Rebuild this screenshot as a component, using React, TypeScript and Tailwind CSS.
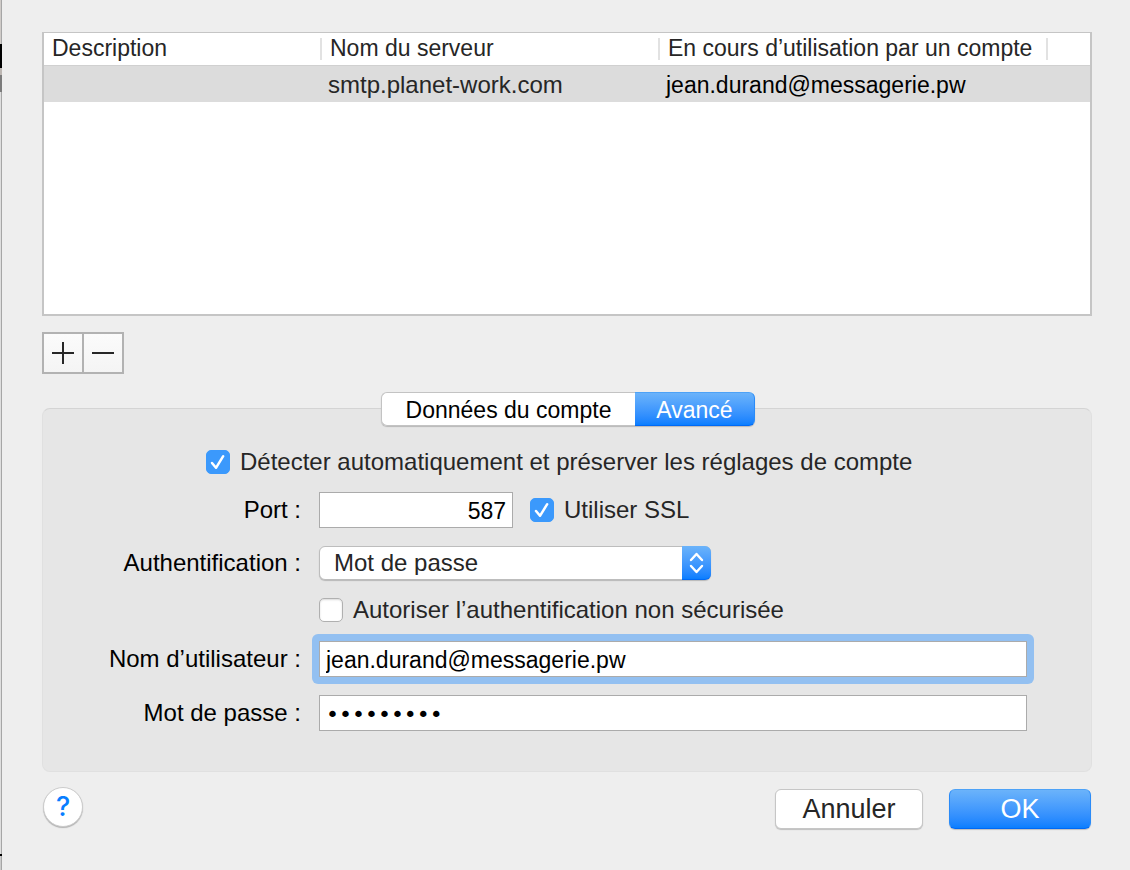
import { useState, type InputHTMLAttributes, type ReactNode } from 'react';

interface SmtpServer {
  description: string;
  host: string;
  usedBy: string;
}

const servers: SmtpServer[] = [
  { description: '', host: 'smtp.planet-work.com', usedBy: 'jean.durand@messagerie.pw' },
];

const columns = ['Description', 'Nom du serveur', 'En cours d’utilisation par un compte'];

const tabs = [
  { id: 'account', label: 'Données du compte', width: 'w-[254px]' },
  { id: 'advanced', label: 'Avancé', width: 'w-[120px]' },
];

function Checkbox({ id, label, defaultChecked }: { id: string; label: string; defaultChecked?: boolean }) {
  return (
    <div className="flex items-center gap-[10px]">
      <span className="relative w-6 h-6 shrink-0">
        <input
          id={id}
          type="checkbox"
          defaultChecked={defaultChecked}
          className="peer block appearance-none w-6 h-6 rounded-[5px] bg-white border border-[#b0b0b0] shadow-[inset_0_1px_2px_rgba(0,0,0,0.15)] checked:bg-[#3b99fc] checked:border-[#3b99fc] checked:shadow-none"
        />
        <svg className="absolute inset-0 w-6 h-6 pointer-events-none hidden peer-checked:block" viewBox="0 0 24 24" fill="none">
          <path d="M6 13l4 4.8 7.2-11.6" stroke="white" strokeWidth="2.5" strokeLinecap="round" strokeLinejoin="round" />
        </svg>
      </span>
      <label htmlFor={id} className="text-2xl leading-6 text-[#262626] whitespace-nowrap">{label}</label>
    </div>
  );
}

function Field({ id, label, children }: { id?: string; label?: string; children: ReactNode }) {
  return (
    <div className="flex items-center gap-[18px]">
      {label ? (
        <label htmlFor={id} className="w-[258px] shrink-0 text-right text-2xl leading-6 text-black whitespace-nowrap">{label} :</label>
      ) : (
        <span className="w-[258px] shrink-0" />
      )}
      {children}
    </div>
  );
}

function TextInput({ className, ...props }: InputHTMLAttributes<HTMLInputElement>) {
  return (
    <input
      {...props}
      className={`h-9 min-w-0 bg-white border border-[#ababab] text-black outline-none pt-[2px] px-[6px] ${className ?? ''}`}
    />
  );
}

export default function App() {
  const [activeTab, setActiveTab] = useState('advanced');

  return (
    <div className="min-h-screen flex bg-[#eeeeee] text-[23px] leading-6 font-['Liberation_Sans',Arial,sans-serif]">
      {/* Sliver of the window behind the sheet */}
      <div className="w-[2px] shrink-0 flex flex-col">
        <div className="h-11 bg-[#cfcbc8] border-r border-[#a6a6a6]" />
        <div className="h-6 bg-black" />
        <div className="h-[7px] bg-[#bdb7b3]" />
        <div className="h-[17px] bg-[#7c7c7c]" />
        <div className="flex-1 bg-[#dedede] border-r border-[#a6a6a6]" />
        <div className="h-[2px] bg-black" />
        <div className="h-[14px] bg-[#cccccc] border-r border-[#a6a6a6]" />
      </div>

      <main className="flex-1 min-w-0 pt-8 pl-10 pr-[38px] pb-10">
        {/* Server list */}
        <div className="min-h-[284px] bg-white border-2 border-t border-[#c5c5c5]">
          <table className="w-full table-fixed border-collapse">
            <colgroup>
              <col className="w-[278px]" />
              <col className="w-[338px]" />
              <col className="w-[388px]" />
              <col />
            </colgroup>
            <thead>
              <tr className="border-b border-[#d0d0d0]">
                {columns.map((c) => (
                  <th key={c} scope="col" className="h-8 p-0 text-left font-normal text-[#262626] whitespace-nowrap">
                    <span className="block pl-2 h-[22px] leading-5 border-r-2 border-[#e2e2e2]">{c}</span>
                  </th>
                ))}
                <td />
              </tr>
            </thead>
            <tbody>
              {servers.map((s) => (
                <tr key={s.host} className="bg-[#dcdcdc] text-black">
                  <td className="h-[37px] p-0 pl-[6px]">{s.description}</td>
                  <td className="h-[37px] p-0 pt-[2px] pl-[6px] text-2xl leading-6 text-[#262626]">{s.host}</td>
                  <td className="h-[37px] p-0 pt-[2px] pl-[6px]">{s.usedBy}</td>
                  <td />
                </tr>
              ))}
            </tbody>
          </table>
        </div>

        <div className="mt-4 inline-flex align-top border-2 border-[#b2b2b2] bg-linear-to-b from-[#fbfbfb] to-[#f4f4f4]">
          <button type="button" aria-label="Ajouter" className="w-10 h-[38px] flex items-center border-r-2 border-[#b2b2b2] pl-2">
            <svg width="22" height="22" viewBox="0 0 22 22"><path d="M0 11h22M11 0v22" stroke="#262626" strokeWidth="2" /></svg>
          </button>
          <button type="button" aria-label="Supprimer" className="w-[38px] h-[38px] flex items-center justify-center">
            <svg width="22" height="22" viewBox="0 0 22 22"><path d="M0 11h22" stroke="#262626" strokeWidth="2" /></svg>
          </button>
        </div>

        {/* Settings panel */}
        <section className="mt-[34px] rounded-lg bg-[#e6e6e6] border border-[#e0e0e0] border-t-[#d4d4d4] pb-10 pr-16">
          <div className="-mt-[17px] -mr-16 pl-[2px] flex justify-center">
            <div role="tablist" className="flex rounded-[6px] shadow-[0_1px_1px_rgba(0,0,0,0.2)]">
              {tabs.map((t) => (
                <button
                  key={t.id}
                  type="button"
                  role="tab"
                  aria-selected={t.id === activeTab}
                  onClick={() => setActiveTab(t.id)}
                  className={`${t.width} h-[34px] pt-[2px] border first:rounded-l-[6px] last:rounded-r-[6px] first:border-r-0 last:border-l-0 ${
                    t.id === activeTab
                      ? 'text-white bg-linear-to-b from-[#6bb3fa] to-[#087eff] border-t-[#4da2f7] border-b-[#0069f5] border-x-[#2a8bf8]'
                      : 'text-black bg-white border-[#c3c3c3]'
                  }`}
                >
                  {t.label}
                </button>
              ))}
            </div>
          </div>

          <form className="mt-6 flex flex-col gap-[18px]" onSubmit={(e) => e.preventDefault()}>
            <div className="pl-[163px]">
              <Checkbox id="auto-detect" label="Détecter automatiquement et préserver les réglages de compte" defaultChecked />
            </div>
            <Field id="port" label="Port">
              <div className="flex items-center gap-[17px]">
                <TextInput id="port" type="text" inputMode="numeric" defaultValue="587" className="w-[194px] text-right" />
                <Checkbox id="ssl" label="Utiliser SSL" defaultChecked />
              </div>
            </Field>
            <Field id="auth" label="Authentification">
              <div className="relative w-[392px]">
                <select
                  id="auth"
                  defaultValue="password"
                  className="block appearance-none w-full h-[34px] rounded-[6px] bg-white border border-[#bdbdbd] shadow-[0_1px_1px_rgba(0,0,0,0.2)] pl-[14px] pr-9 text-2xl leading-6 text-[#262626] outline-none"
                >
                  <option value="password">Mot de passe</option>
                </select>
                <span className="absolute inset-y-0 right-0 w-[29px] rounded-r-[6px] bg-linear-to-b from-[#6bb3fa] to-[#087eff] border-b border-[#0069f5] pointer-events-none">
                  <svg width="29" height="34" viewBox="0 0 29 34" fill="none" stroke="white" strokeWidth="2.4" strokeLinecap="round" strokeLinejoin="round">
                    <path d="M9 14l5.5-6 5.5 6M9 20l5.5 6 5.5-6" />
                  </svg>
                </span>
              </div>
            </Field>
            <Field>
              <Checkbox id="insecure" label="Autoriser l’authentification non sécurisée" />
            </Field>
            <div className="mt-[1px] flex flex-col gap-[18px]">
              <Field id="username" label="Nom d’utilisateur">
                <span className="flex flex-1 -m-[7px] p-[7px] rounded-[6px] bg-[#93c0f1]">
                  <TextInput id="username" type="text" defaultValue="jean.durand@messagerie.pw" className="flex-1" />
                </span>
              </Field>
              <Field id="password" label="Mot de passe">
                <TextInput id="password" type="password" defaultValue="motdepass" className="flex-1 text-[22px] font-['DejaVu_Sans',sans-serif]" />
              </Field>
            </div>
          </form>
        </section>

        {/* Footer */}
        <div className="mt-[15px] px-[1px] flex items-start">
          <button type="button" aria-label="Aide" className="w-10 h-10 rounded-full bg-white border border-[#cccccc] shadow-[0_1px_1px_rgba(0,0,0,0.25)] text-[27px] font-medium text-[#087eff] font-['Inter',sans-serif]">
            ?
          </button>
          <div className="ml-auto pt-[2px] flex gap-[26px] text-[27px]">
            <button type="button" className="w-[148px] h-10 rounded-[6px] bg-white border border-[#c6c6c6] shadow-[0_1px_1px_rgba(0,0,0,0.2)] text-[#262626]">
              Annuler
            </button>
            <button type="submit" className="w-[142px] h-10 rounded-[6px] bg-linear-to-b from-[#6bb3fa] to-[#087eff] border border-t-[#4da2f7] border-b-[#0069f5] border-x-[#2a8bf8] shadow-[0_1px_1px_rgba(0,0,0,0.2)] text-white">
              OK
            </button>
          </div>
        </div>
      </main>
    </div>
  );
}
